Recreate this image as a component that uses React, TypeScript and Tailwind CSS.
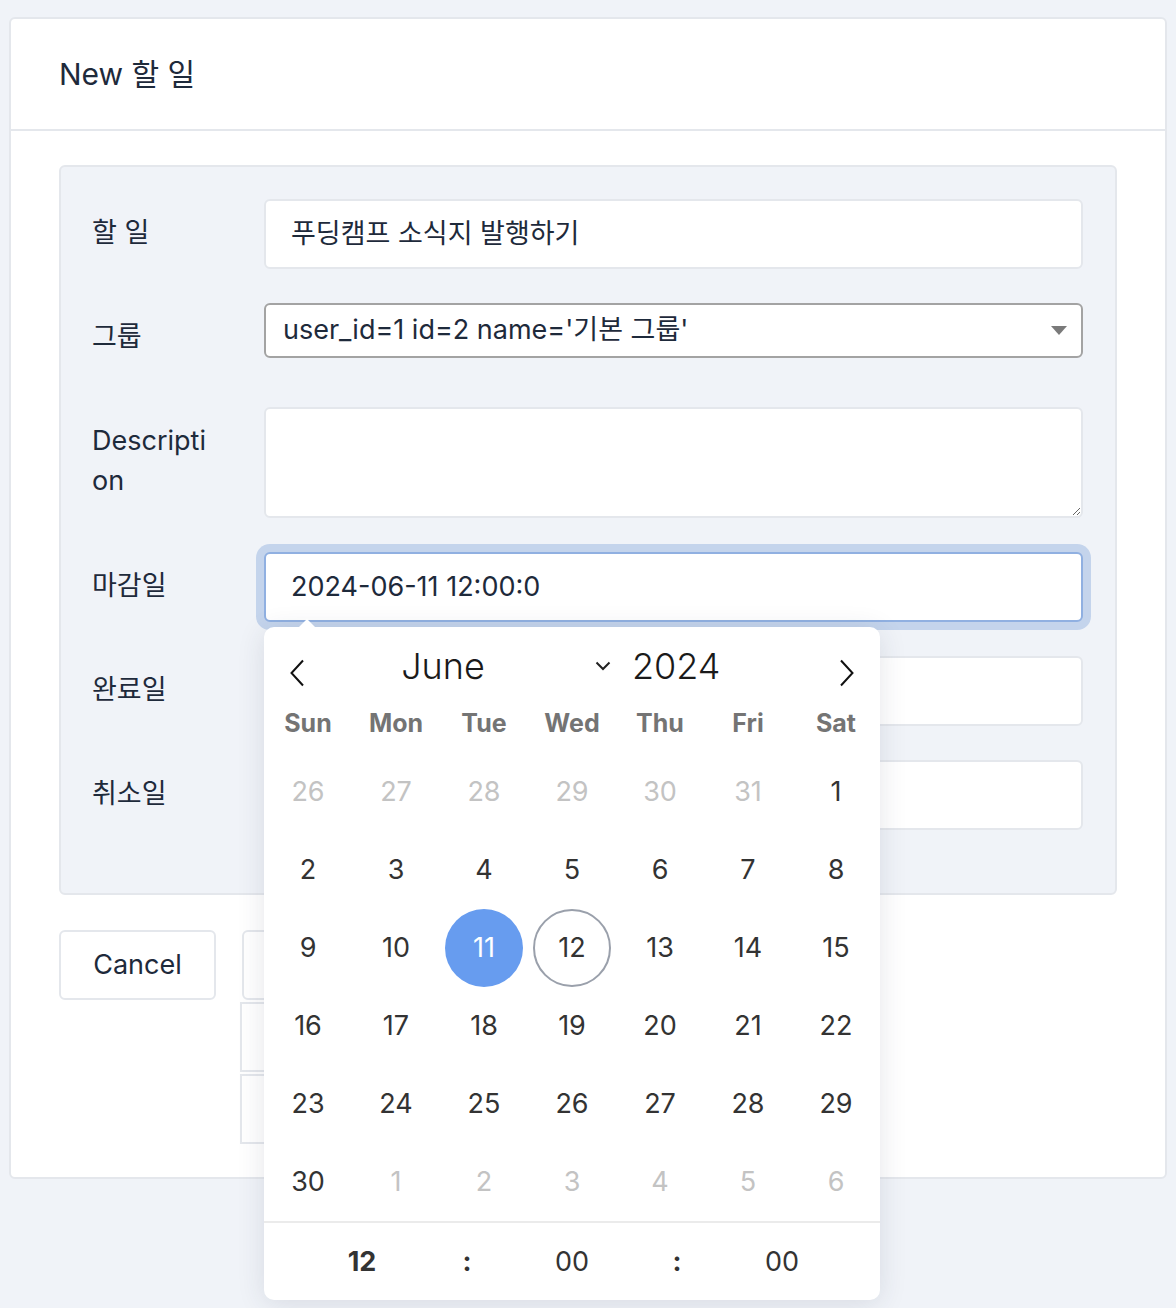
import React from 'react';

type Day = { n: number; muted?: boolean };

const weeks: Day[][] = [
    [{ n: 26, muted: true }, { n: 27, muted: true }, { n: 28, muted: true }, { n: 29, muted: true }, { n: 30, muted: true }, { n: 31, muted: true }, { n: 1 }],
    [2, 3, 4, 5, 6, 7, 8].map(n => ({ n })),
    [9, 10, 11, 12, 13, 14, 15].map(n => ({ n })),
    [16, 17, 18, 19, 20, 21, 22].map(n => ({ n })),
    [23, 24, 25, 26, 27, 28, 29].map(n => ({ n })),
    [{ n: 30 }, { n: 1, muted: true }, { n: 2, muted: true }, { n: 3, muted: true }, { n: 4, muted: true }, { n: 5, muted: true }, { n: 6, muted: true }],
];

const weekdays = ['Sun', 'Mon', 'Tue', 'Wed', 'Thu', 'Fri', 'Sat'];

function Calendar() {
    return (
        <div className="absolute left-0 top-full mt-[5px] z-20 w-[616px] bg-white rounded-[10px] shadow-[0_4px_28px_rgba(40,50,70,0.12)] text-[#333]">
            {/* pointer */}
            <svg className="absolute left-[34px] -top-[9px]" width="18" height="10" viewBox="0 0 18 10">
                <path d="M0 10 L9 1 L18 10 Z" fill="#ffffff" />
            </svg>

            {/* month / year header */}
            <div className="h-[78px] flex items-center">
                <div className="w-[66px] flex justify-center pt-[14px]">
                    <svg width="16" height="28" viewBox="0 0 16 28" fill="none">
                        <path d="M14 1.5 L2.5 14 L14 26.5" stroke="#111" strokeWidth="2" />
                    </svg>
                </div>
                <div className="w-[226px] text-center text-[36px] font-light text-[#1a1a1a] leading-none">June</div>
                <svg className="ml-[39px]" width="16" height="10" viewBox="0 0 16 10" fill="none">
                    <path d="M1.5 1.5 L8 8 L14.5 1.5" stroke="#222" strokeWidth="2" />
                </svg>
                <div className="ml-[21px] text-[36px] font-light text-[#1a1a1a] leading-none">2024</div>
                <div className="flex-1" />
                <div className="w-[66px] flex justify-center pt-[14px]">
                    <svg width="16" height="28" viewBox="0 0 16 28" fill="none">
                        <path d="M2 1.5 L13.5 14 L2 26.5" stroke="#111" strokeWidth="2" />
                    </svg>
                </div>
            </div>

            {/* weekdays */}
            <div className="grid grid-cols-7 h-[36px] mb-[12px] items-center">
                {weekdays.map(w => (
                    <div key={w} className="text-center text-[25px] font-bold text-[#747474]">{w}</div>
                ))}
            </div>

            {/* days */}
            <div>
                {weeks.map((week, i) => (
                    <div key={i} className="grid grid-cols-7 h-[78px]">
                        {week.map((d, j) => {
                            const selected = i === 2 && d.n === 11;
                            const today = i === 2 && d.n === 12;
                            return (
                                <div key={j} className="flex items-center justify-center">
                                    {selected ? (
                                        <div className="w-[78px] h-[78px] rounded-full bg-[#679cef] text-white flex items-center justify-center text-[27px]">11</div>
                                    ) : today ? (
                                        <div className="w-[78px] h-[78px] rounded-full border-2 border-[#9aa0ab] flex items-center justify-center text-[27px]">12</div>
                                    ) : (
                                        <span className={d.muted ? 'text-[27px] text-[#c3c3c3]' : 'text-[27px] text-[#333]'}>{d.n}</span>
                                    )}
                                </div>
                            );
                        })}
                    </div>
                ))}
            </div>

            {/* time */}
            <div className="h-[79px] border-t-2 border-[#ebebeb] flex justify-center items-center pt-[2px]">
                <div className="w-[105px] text-center text-[27px] font-bold">12</div>
                <div className="w-[105px] text-center text-[27px] font-bold">:</div>
                <div className="w-[105px] text-center text-[27px]">00</div>
                <div className="w-[105px] text-center text-[27px] font-bold">:</div>
                <div className="w-[105px] text-center text-[27px]">00</div>
            </div>
        </div>
    );
}

function Row({ label, children, last }: { label: string; children: React.ReactNode; last?: boolean }) {
    return (
        <div className={last ? 'flex min-h-[70px]' : 'flex mb-[34px] min-h-[70px]'}>
            <div className="w-[120px] mr-[52px] shrink-0 pt-[14px] leading-[40px] break-all">{label}</div>
            <div className="flex-1">{children}</div>
        </div>
    );
}

export default function App() {
    return (
        <div className="min-h-screen bg-[#f0f3f8] px-[9px] pt-[17px] pb-[40px] font-['Inter','Noto_Sans_CJK_KR',sans-serif] text-[#1e2a3b] text-[27px]">
            <div className="bg-white border-2 border-[#e4e7ec] rounded-[6px]">
                {/* Header */}
                <div className="h-[112px] flex items-center px-[48px] border-b-2 border-[#e4e7ec]">
                    <h1 className="text-[30px] font-normal">New 할 일</h1>
                </div>

                <div className="px-[48px] pt-[34px] pb-[33px]">
                    {/* Form panel */}
                    <div className="bg-[#f0f3f8] border-2 border-[#e4e7ec] rounded-[6px] pt-[32px] pb-[63px] pl-[31px] pr-[32px]">
                        <Row label="할 일">
                            <div className="h-[70px] bg-white border-2 border-[#e4e7ec] rounded-[6px] flex items-center px-[25px]">
                                푸딩캠프 소식지 발행하기
                            </div>
                        </Row>
                        <Row label="그룹">
                            <div className="h-[55px] bg-white border-2 border-[#a3a3a3] rounded-[6px] flex items-center pl-[17px] pr-[14px]">
                                <span className="flex-1">user_id=1 id=2 name='기본 그룹'</span>
                                <svg width="16" height="10" viewBox="0 0 16 10">
                                    <path d="M0 0 L16 0 L8 9 Z" fill="#7a7a7a" />
                                </svg>
                            </div>
                        </Row>
                        <Row label="Description">
                            <textarea className="block w-full h-[111px] bg-white border-2 border-[#e4e7ec] rounded-[6px] resize-y outline-none" />
                        </Row>
                        <Row label="마감일">
                            <div className="relative">
                                <div className="h-[70px] bg-white border-2 border-[#90b0e1] rounded-[6px] ring-8 ring-[#c4d4ec] flex items-center px-[25px]">
                                    2024-06-11 12:00:0
                                </div>
                                <Calendar />
                            </div>
                        </Row>
                        <Row label="완료일">
                            <div className="h-[70px] bg-white border-2 border-[#e4e7ec] rounded-[6px]" />
                        </Row>
                        <Row label="취소일" last>
                            <div className="h-[70px] bg-white border-2 border-[#e4e7ec] rounded-[6px]" />
                        </Row>
                    </div>

                    {/* Buttons */}
                    <div className="flex items-start mt-[35px]">
                        <button className="w-[157px] h-[70px] bg-white border-2 border-[#e4e7ec] rounded-[6px] text-[27px]">
                            Cancel
                        </button>
                        <div className="ml-[24px] flex flex-col">
                            <button className="ml-[2px] w-[150px] h-[70px] bg-white border-2 border-[#e4e7ec] rounded-[6px]" />
                            <div className="mt-[2px] w-[160px] h-[70px] bg-white border-2 border-[#e4e7ec]" />
                            <div className="mt-[2px] w-[160px] h-[70px] bg-white border-2 border-[#e4e7ec]" />
                        </div>
                    </div>
                </div>
            </div>
        </div>
    );
}
